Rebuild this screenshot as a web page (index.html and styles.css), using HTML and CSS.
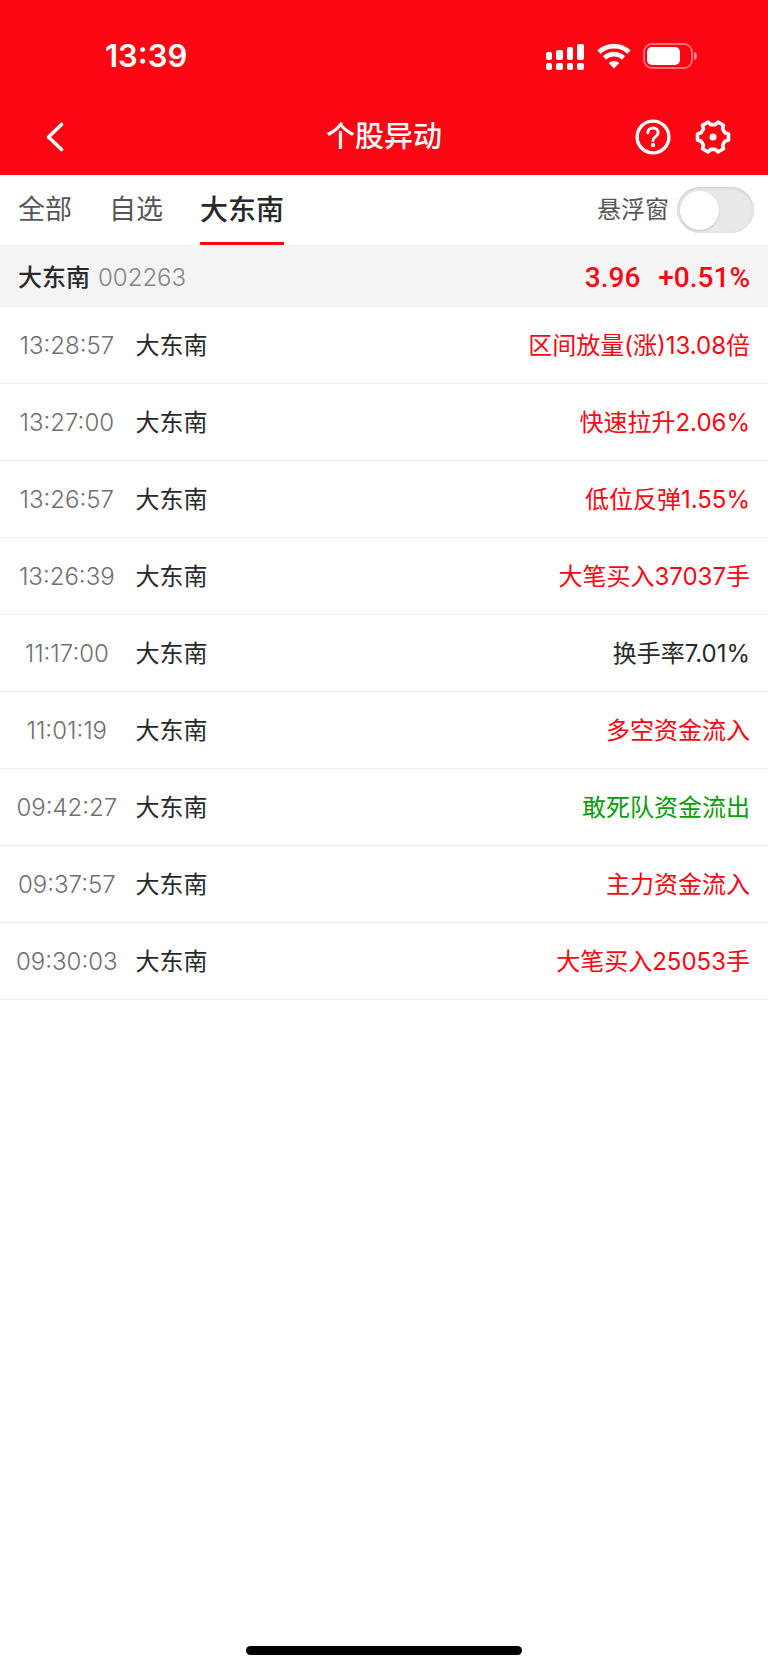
FILE: index.html
```html
<!DOCTYPE html>
<html lang="zh-CN">
<head>
<meta charset="utf-8">
<meta name="viewport" content="width=device-width, initial-scale=1">
<title>个股异动</title>
<link rel="stylesheet" href="styles.css">
</head>
<body>
<header class="header">
  <div class="status">
    <time class="clock">13:39</time>
    <div class="status-icons">
      <svg width="40" height="28" viewBox="0 0 40 28" fill="#fff" aria-hidden="true">
        <rect x="1" y="10" width="6" height="8" rx="2"/><rect x="11" y="8" width="7" height="10" rx="2"/><rect x="22" y="5" width="6" height="13" rx="2"/><rect x="32" y="2" width="7" height="16" rx="2"/>
        <rect x="1" y="21" width="6" height="7" rx="2"/><rect x="11" y="21" width="7" height="7" rx="2"/><rect x="22" y="21" width="6" height="7" rx="2"/><rect x="32" y="21" width="7" height="7" rx="2"/>
      </svg>
      <svg width="34" height="26" viewBox="0 0 34 26" aria-hidden="true">
        <g fill="none" stroke="#fff" stroke-width="4.6"><path d="M2 9.2a21.5 21.5 0 0 1 30 0"/><path d="M7.500 15a13.500 13.500 0 0 1 19 0"/></g>
        <path fill="#fff" d="M17 25.500l-5.300-5.400a7.600 7.600 0 0 1 10.600 0z"/>
      </svg>
      <svg width="55" height="26" viewBox="0 0 55 26" aria-hidden="true">
        <rect x="1" y="1" width="48" height="24" rx="8" fill="none" stroke="#fff" stroke-opacity=".42" stroke-width="2"/>
        <rect x="4" y="4" width="33" height="18" rx="5" fill="#fff"/>
        <path fill="#fff" fill-opacity=".5" d="M51 9c4 1 4 7 0 8z"/>
      </svg>
    </div>
  </div>
  <div class="navbar">
    <button class="icon-btn back" aria-label="返回">
      <svg width="18" height="30" viewBox="0 0 18 30" fill="none" stroke="#fff" stroke-width="3.600" stroke-linecap="round" stroke-linejoin="round"><path d="M15.500 2.500L2.500 15l13 12.500"/></svg>
    </button>
    <h1 class="title">个股异动</h1>
    <div class="nav-actions">
      <button class="icon-btn" aria-label="帮助">
        <svg width="36" height="36" viewBox="0 0 36 36" fill="none" stroke="#fff" stroke-width="3.400" stroke-linecap="round"><circle cx="18" cy="18" r="15.900"/><path d="M12.800 13.800c0-6.300 10.400-6.300 10.400 0 0 4-5.200 3.700-5.200 7.700" stroke-width="3"/><circle cx="18" cy="26" r="2.200" fill="#fff" stroke="none"/></svg>
      </button>
      <button class="icon-btn" aria-label="设置">
        <svg width="36" height="36" viewBox="-18 -18 36 36" fill="none" stroke="#fff" stroke-width="3.600" stroke-linejoin="round"><path d="M15.500-3.100V3.100L11.800 4.300 9.600 8.100 10.500 11.800 5 15 2.200 12.400H-2.200L-5 15-10.500 11.800-9.600 8.100-11.800 4.300-15.500 3.100V-3.100L-11.800-4.300-9.600-8.100-10.500-11.800-5-15-2.200-12.400H2.200L5-15 10.500-11.800 9.600-8.100 11.800-4.300Z"/><circle r="3.500" fill="#fff" stroke="none"/></svg>
      </button>
    </div>
  </div>
</header>
<main>
  <div class="toolbar">
    <nav class="tabs">
      <a class="tab" href="#all">全部</a>
      <a class="tab" href="#watch">自选</a>
      <a class="tab active" href="#stock" aria-current="page">大东南</a>
    </nav>
    <label class="float-toggle">悬浮窗<input class="switch" type="checkbox" role="switch"></label>
  </div>
  <section class="summary">
    <h2 class="stock">大东南</h2><span class="code">002263</span>
    <span class="price">3.96</span><span class="change">+0.51%</span>
  </section>
  <table class="events">
    <tbody>
      <tr><td class="time">13:28:57</td><td class="name">大东南</td><td class="event up">区间放量(涨)13.08倍</td></tr>
      <tr><td class="time">13:27:00</td><td class="name">大东南</td><td class="event up">快速拉升2.06%</td></tr>
      <tr><td class="time">13:26:57</td><td class="name">大东南</td><td class="event up">低位反弹1.55%</td></tr>
      <tr><td class="time">13:26:39</td><td class="name">大东南</td><td class="event up">大笔买入37037手</td></tr>
      <tr><td class="time">11:17:00</td><td class="name">大东南</td><td class="event">换手率7.01%</td></tr>
      <tr><td class="time">11:01:19</td><td class="name">大东南</td><td class="event up">多空资金流入</td></tr>
      <tr><td class="time">09:42:27</td><td class="name">大东南</td><td class="event down">敢死队资金流出</td></tr>
      <tr><td class="time">09:37:57</td><td class="name">大东南</td><td class="event up">主力资金流入</td></tr>
      <tr><td class="time">09:30:03</td><td class="name">大东南</td><td class="event up">大笔买入25053手</td></tr>
    </tbody>
  </table>
</main>
<footer class="home"><div class="home-bar"></div></footer>
</body>
</html>
```
FILE: styles.css
```css
* { box-sizing: border-box; }
body {
  margin: 0;
  min-height: 100vh;
  display: flex;
  flex-direction: column;
  background: #fff;
  color: #28292b;
  font-family: Inter, "Noto Sans CJK SC", sans-serif;
  font-size: 24px;
  line-height: 32px;
}
main { flex: 1; }
.header { background: #fb0613; color: #fff; }
.status {
  display: flex;
  justify-content: space-between;
  align-items: center;
  height: 100px;
  padding: 12px 70px 0 105px;
}
.clock { font-size: 31px; font-weight: 600; }
.status-icons { display: flex; align-items: center; gap: 12px; }
.navbar {
  display: grid;
  grid-template-columns: 1fr auto 1fr;
  align-items: center;
  height: 75px;
  padding: 0 37px 2px;
}
.title { margin: 0; font-size: 29px; line-height: 42px; font-weight: 500; }
.nav-actions { display: flex; justify-content: flex-end; gap: 24px; }
.icon-btn { display: flex; padding: 0; border: 0; background: none; }
.back { justify-self: start; padding-left: 9px; }
.toolbar {
  display: flex;
  justify-content: space-between;
  align-items: center;
  height: 70px;
  padding: 0 14px 0 18px;
}
.tabs { display: flex; gap: 37px; height: 100%; }
.tab {
  display: flex;
  align-items: center;
  padding-top: 2px;
  border-bottom: 3px solid transparent;
  color: #555658;
  font-size: 27px;
  text-decoration: none;
}
.tab.active { border-color: #fb0613; border-radius: 1px; color: #28292b; font-size: 28px; font-weight: 500; }
.float-toggle { display: flex; align-items: center; gap: 8px; color: #555658; }
.switch {
  appearance: none;
  display: flex;
  align-items: center;
  width: 77px;
  height: 46px;
  margin: 0;
  padding: 0 3px;
  border-radius: 23px;
  background: #e9e9e9;
  box-shadow: inset 0 1px 3px #c8c8c8;
}
.switch::before {
  content: "";
  width: 39px;
  height: 39px;
  border-radius: 50%;
  background: #fff;
  box-shadow: 0 1px 2px #bbb;
}
.switch:checked { justify-content: flex-end; background: #fb0613; }
.summary {
  display: flex;
  align-items: center;
  height: 62px;
  padding: 3px 18px 0;
  background: #f4f4f4;
}
.stock { margin: 0 8px 0 0; font-size: 24px; font-weight: 500; }
.code { color: #858587; font-weight: 300; }
.price, .change { color: #fb0613; font-family: Roboto, sans-serif; font-size: 28px; font-weight: 500; }
.price { margin-left: auto; }
.change { margin-left: 18px; }
.events { width: 100%; border-collapse: separate; border-spacing: 0; }
.events td { height: 77px; padding: 2px 0 0; border-bottom: 1px solid #eee; }
.events .time { width: 134px; padding-right: 18px; padding-left: 16px; color: #6f6f71; font-weight: 300; text-align: center; }
.events .event { padding-right: 18px; text-align: right; }
.up { color: #fb0613; }
.down { color: #099c09; }
.home { display: flex; justify-content: center; padding-bottom: 14px; }
.home-bar { width: 36%; height: 9px; border-radius: 5px; background: #000; }
```
